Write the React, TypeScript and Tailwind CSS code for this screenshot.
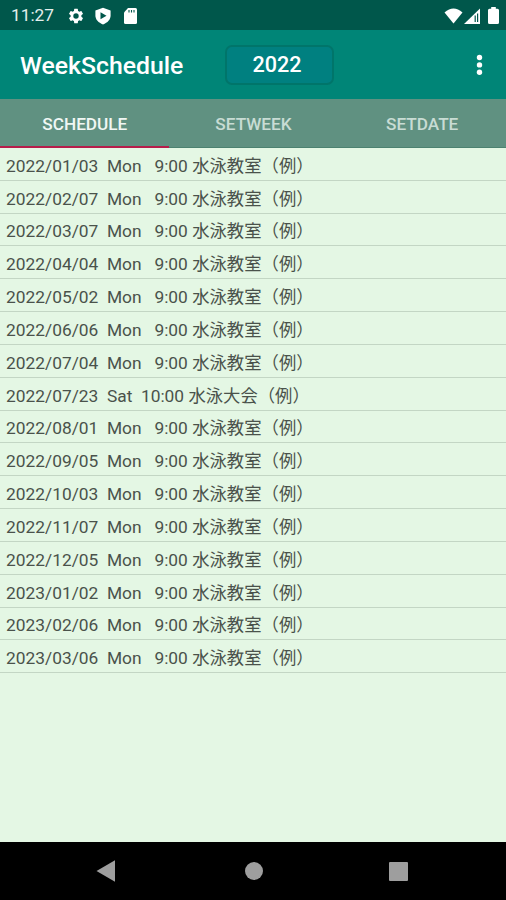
import React from "react";

const rows = [
  "2022/01/03  Mon   9:00 水泳教室（例）",
  "2022/02/07  Mon   9:00 水泳教室（例）",
  "2022/03/07  Mon   9:00 水泳教室（例）",
  "2022/04/04  Mon   9:00 水泳教室（例）",
  "2022/05/02  Mon   9:00 水泳教室（例）",
  "2022/06/06  Mon   9:00 水泳教室（例）",
  "2022/07/04  Mon   9:00 水泳教室（例）",
  "2022/07/23  Sat  10:00 水泳大会（例）",
  "2022/08/01  Mon   9:00 水泳教室（例）",
  "2022/09/05  Mon   9:00 水泳教室（例）",
  "2022/10/03  Mon   9:00 水泳教室（例）",
  "2022/11/07  Mon   9:00 水泳教室（例）",
  "2022/12/05  Mon   9:00 水泳教室（例）",
  "2023/01/02  Mon   9:00 水泳教室（例）",
  "2023/02/06  Mon   9:00 水泳教室（例）",
  "2023/03/06  Mon   9:00 水泳教室（例）",
];

const StatusBar: React.FC = () => (
  <div className="flex h-[30px] shrink-0 items-center bg-[#00574b] pl-[11px] pr-[7px] pt-px text-white">
    <span className="w-[56px] pt-px text-[17.3px] leading-none text-[#e4efed]">11:27</span>
    <svg className="h-[18px] w-[18px]" viewBox="0 0 24 24" fill="currentColor">
      <path d="M19.14 12.94c.04-.3.06-.61.06-.94s-.02-.64-.07-.94l2.03-1.58a.49.49 0 0 0 .12-.61l-1.92-3.32a.49.49 0 0 0-.59-.22l-2.39.96c-.5-.38-1.03-.7-1.62-.94l-.36-2.54a.48.48 0 0 0-.48-.41h-3.84a.48.48 0 0 0-.47.41l-.36 2.54c-.59.24-1.13.57-1.62.94l-2.39-.96a.48.48 0 0 0-.59.22L2.74 8.87a.48.48 0 0 0 .12.61l2.03 1.58c-.05.3-.09.63-.09.94s.02.64.07.94l-2.03 1.58a.49.49 0 0 0-.12.61l1.92 3.32c.12.22.37.29.59.22l2.39-.96c.5.38 1.03.7 1.62.94l.36 2.54c.05.24.24.41.48.41h3.84c.24 0 .44-.17.47-.41l.36-2.54c.59-.24 1.13-.56 1.62-.94l2.39.96c.22.08.47 0 .59-.22l1.92-3.32a.48.48 0 0 0-.12-.61zM12 15.600a3.600 3.600 0 1 1 0-7.200 3.600 3.600 0 0 1 0 7.200z" />
    </svg>
    <svg className="ml-[9px] h-[18px] w-[18px]" viewBox="0 0 18 18">
      <path d="M9 .8 16.6 3.5v5c0 4-3 7.2-7.6 8.9C4.4 15.7 1.4 12.5 1.4 8.5v-5z" fill="currentColor" />
      <path d="M6.5 5.200 12.500 8.700 6.500 12.200z" fill="#00574b" />
    </svg>
    <svg className="ml-[9px] h-[18px] w-[18px]" viewBox="0 0 18 18">
      <path d="M7 1h7.500q1.500 0 1.500 1.500v13q0 1.500-1.500 1.500h-10Q3 17 3 15.500V5.500z" fill="currentColor" />
      <path d="M8 3v2.400M10.500 3v2.400M13 3v2.400" stroke="#00574b" strokeWidth="1.100" />
    </svg>
    <svg className="ml-auto h-[16px] w-[19px]" viewBox="0 0 19 16" fill="currentColor">
      <path d="M.5 4.500Q9.500-3.300 18.500 4.500L9.500 15.500z" />
    </svg>
    <svg className="ml-px h-[16px] w-[16px]" viewBox="0 0 16 16">
      <path d="M0 16 16 .5V16z" fill="currentColor" />
      <path d="M10.600 7.500h1.200V14h-1.200zM13 5.500h1.200V14H13z" fill="#00574b" />
    </svg>
    <svg className="ml-[8px] h-[17px] w-[11px]" viewBox="0 0 11 17" fill="currentColor">
      <path d="M3.200 0h4.600v1.800H9.500Q11 1.800 11 3.300v12.200q0 1.500-1.500 1.500h-8Q0 17 0 15.500V3.300q0-1.500 1.500-1.500h1.700z" />
    </svg>
  </div>
);

const AppBar: React.FC = () => (
  <div className="flex h-[69px] shrink-0 items-center bg-[#008577] pl-[20px] pr-[23px] text-white">
    <h1 className="w-[205px] whitespace-nowrap pt-[3px] text-[24.8px] font-medium leading-none">
      WeekSchedule
    </h1>
    <button className="flex h-[40px] w-[109px] items-center justify-center rounded-[7px] border-2 border-[#00756a] bg-[#008080] pr-[5px] pt-px text-[21.6px] font-medium leading-none">
      2022
    </button>
    <svg className="ml-auto h-[22px] w-[7px]" viewBox="0 0 7 22" fill="currentColor">
      <circle cx="3.500" cy="3.500" r="2.700" />
      <circle cx="3.500" cy="10.900" r="2.700" />
      <circle cx="3.500" cy="18.300" r="2.700" />
    </svg>
  </div>
);

const Tabs: React.FC = () => (
  <div className="grid h-[49px] shrink-0 grid-cols-3 bg-[#609181] text-[17.2px] font-medium text-[#c8dcd4]">
    <div className="flex items-center justify-center border-b-[2.5px] border-[#b71c4a] pl-px pt-[4px] text-[#f0f7f4]">
      SCHEDULE
    </div>
    <div className="flex items-center justify-center border-b border-[#4c8270] pl-px pt-[3px]">SETWEEK</div>
    <div className="flex items-center justify-center border-b border-[#4c8270] pl-px pt-[3px]">SETDATE</div>
  </div>
);

const NavBar: React.FC = () => (
  <div className="flex h-[58px] shrink-0 items-center bg-black pl-[96px] text-[#9e9e9e]">
    <svg className="h-[22px] w-[19px]" viewBox="0 0 19 22" fill="currentColor">
      <path d="M.5 11 19 .3v21.400z" />
    </svg>
    <div className="ml-[130px] h-[18px] w-[18px] rounded-full bg-[#9e9e9e]" />
    <div className="ml-[126px] h-[19px] w-[19px] rounded-[1px] bg-[#9e9e9e]" />
  </div>
);

const App: React.FC = () => {
  return (
    <div className="flex h-[900px] w-[506px] flex-col overflow-hidden bg-[#e4f7e4] font-[Roboto,'Noto_Sans_CJK_JP',sans-serif]">
      <StatusBar />
      <AppBar />
      <Tabs />
      <ul className="flex-1">
        {rows.map((row) => (
          <li
            key={row}
            className="flex h-[32.84px] items-center whitespace-pre border-b border-[#c3d6c4] pl-[6px] pt-[5px] text-[17.35px] leading-none text-[#4a524b]"
          >
            {row}
          </li>
        ))}
      </ul>
      <NavBar />
    </div>
  );
};

export default App;
